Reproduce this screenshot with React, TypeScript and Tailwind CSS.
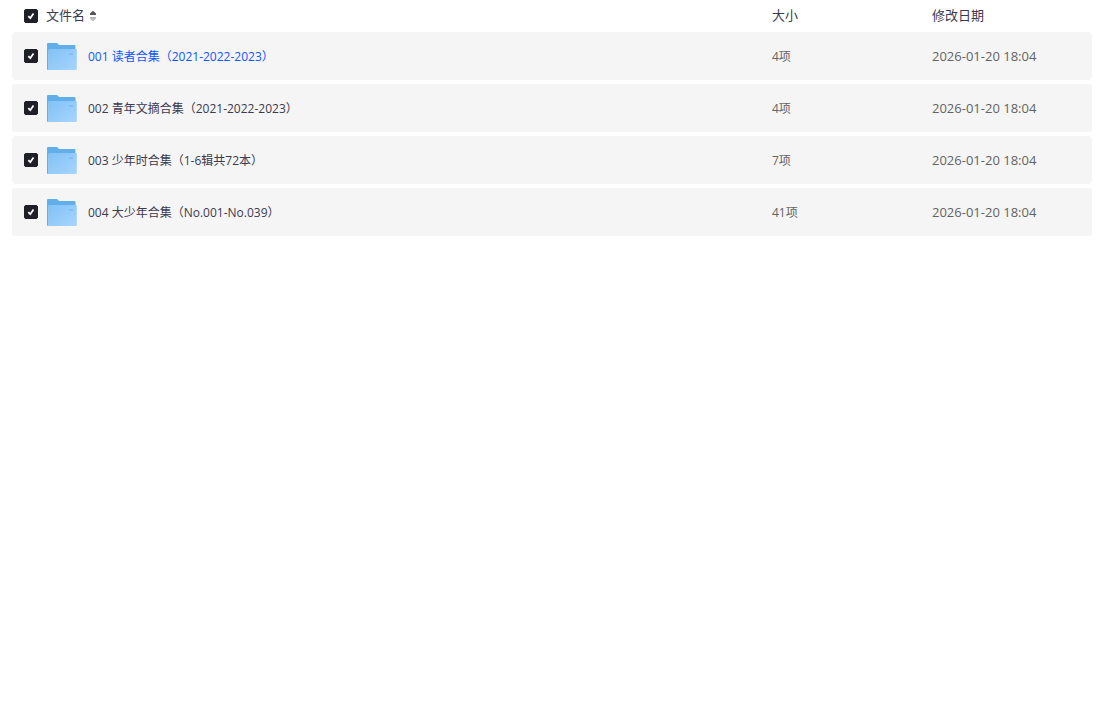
import React, { useState } from 'react';

const files = [
  { id: 1, name: '001 读者合集（2021-2022-2023）', size: '4项', date: '2026-01-20 18:04' },
  { id: 2, name: '002 青年文摘合集（2021-2022-2023）', size: '4项', date: '2026-01-20 18:04' },
  { id: 3, name: '003 少年时合集（1-6辑共72本）', size: '7项', date: '2026-01-20 18:04' },
  { id: 4, name: '004 大少年合集（No.001-No.039）', size: '41项', date: '2026-01-20 18:04' },
];

function FolderIcon() {
  return (
    <svg className="w-8 h-8 shrink-0" viewBox="0 0 32 32" aria-hidden="true">
      <defs>
        <linearGradient id="folder-front" x1="0" y1="0" x2="1" y2="1">
          <stop offset="0" stopColor="#82c1f6" />
          <stop offset="1" stopColor="#a6d5fd" />
        </linearGradient>
      </defs>
      <path d="M1 4a1 1 0 0 1 1-1h8.600c.5 0 .9.3 1.200.7L13 5h15.500a1 1 0 0 1 1 1v5H2.500v19H2a1 1 0 0 1-1-1z" fill="#60aeea" />
      <path d="M2.200 9h27.600a1 1 0 0 1 1 1v19a1 1 0 0 1-1 1H2.200z" fill="url(#folder-front)" />
      <path d="M23 13h4v2h-4z" fill="#82bff2" />
    </svg>
  );
}

function SortIcon() {
  return (
    <svg className="w-2 h-3" viewBox="0 0 8 12" aria-hidden="true">
      <path d="M3.300 1.300a1 1 0 0 1 1.400 0L7 3.500V5H1V3.500z" fill="#555" />
      <path d="M1 7h6v1.500l-2.300 2.200a1 1 0 0 1-1.400 0L1 8.500z" fill="#b8b8b8" />
    </svg>
  );
}

type CheckboxProps = {
  label: string;
  checked: boolean;
  onChange: () => void;
};

function Checkbox({ label, checked, onChange }: CheckboxProps) {
  return (
    <label className="relative flex w-3.5 h-3.5 shrink-0">
      <input
        type="checkbox"
        aria-label={label}
        checked={checked}
        onChange={onChange}
        className="peer appearance-none w-3.5 h-3.5 rounded-xs border border-gray-300 checked:border-[#1f1f28] checked:bg-[#1f1f28]"
      />
      <svg
        className="absolute inset-0 hidden pointer-events-none peer-checked:block"
        viewBox="0 0 14 14"
        fill="none"
        stroke="#fff"
        strokeWidth="1.800"
        aria-hidden="true"
      >
        <path d="M4.300 7.200l2 2 3.200-4.600" />
      </svg>
    </label>
  );
}

export default function App() {
  const [selected, setSelected] = useState(files.map((f) => f.id));
  const [activeId, setActiveId] = useState(1);
  const allSelected = selected.length === files.length;

  const toggle = (id: number) =>
    setSelected(selected.includes(id) ? selected.filter((s) => s !== id) : [...selected, id]);

  return (
    <main className="min-h-screen overflow-hidden bg-white pl-3 pr-2.5 font-['Open_Sans','Noto_Sans_CJK_SC',sans-serif] text-[#3b3a4f]">
      <table className="-mt-1 w-full table-fixed border-separate border-spacing-x-0 border-spacing-y-1 text-left text-xs">
        <colgroup>
          <col />
          <col className="w-40" />
          <col className="w-40" />
        </colgroup>
        <thead>
          <tr className="h-7 text-[13px]">
            <th className="p-0 pt-1 pl-3 font-normal">
              <div className="flex items-center gap-2">
                <Checkbox
                  label="全选"
                  checked={allSelected}
                  onChange={() => setSelected(allSelected ? [] : files.map((f) => f.id))}
                />
                <button type="button" className="flex items-center gap-1">
                  文件名
                  <SortIcon />
                </button>
              </div>
            </th>
            <th className="p-0 pt-1 font-normal">大小</th>
            <th className="p-0 pt-1 font-normal">修改日期</th>
          </tr>
        </thead>
        <tbody>
          {files.map((file) => (
            <tr key={file.id} className="h-12" onMouseEnter={() => setActiveId(file.id)}>
              <td className="p-0 pl-3 rounded-l bg-[#f5f5f5]">
                <div className="flex items-center gap-2">
                  <Checkbox
                    label={file.name}
                    checked={selected.includes(file.id)}
                    onChange={() => toggle(file.id)}
                  />
                  <a href="#" className="flex items-center gap-2.5">
                    <FolderIcon />
                    <span className={file.id === activeId ? 'pt-0.5 text-[#0f56ff]' : 'pt-0.5'}>{file.name}</span>
                  </a>
                </div>
              </td>
              <td className="p-0 pt-0.5 bg-[#f5f5f5] text-[#636363]">{file.size}</td>
              <td className="p-0 pt-0.5 rounded-r bg-[#f5f5f5] text-[13px] text-[#636363]">{file.date}</td>
            </tr>
          ))}
        </tbody>
      </table>
    </main>
  );
}
